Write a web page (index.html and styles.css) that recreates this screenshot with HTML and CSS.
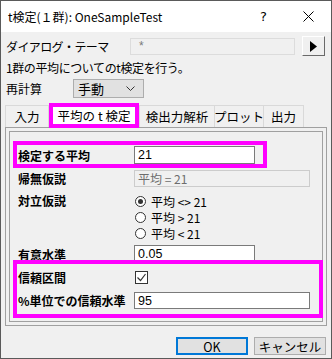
FILE: index.html
```html
<!DOCTYPE html>
<html lang="ja">
<head>
    <meta charset="UTF-8">
    <title>t検定(１群): OneSampleTest</title>
    <link rel="stylesheet" href="styles.css">
</head>
<body>

<div class="window">
    <div class="titlebar">
        <span class="title">t検定(１群): OneSampleTest</span>
        <span class="cap-btn cap-help">?</span>
        <span class="cap-btn">
            <svg width="11" height="11" viewBox="0 0 11 11"><path d="M0.5 0.5 L10.5 10.5 M10.5 0.5 L0.5 10.5" stroke="#000" stroke-width="1" fill="none"/></svg>
        </span>
    </div>

    <div class="client">
        <div class="top-row theme-row">
            <span class="top-label theme-label">ダイアログ・テーマ</span>
            <span class="theme-field">*</span>
            <span class="arrow-btn">
                <svg width="9" height="11" viewBox="0 0 9 11"><path d="M1 0 L8 5.5 L1 11 Z" fill="#000"/></svg>
            </span>
        </div>

        <div class="desc">1群の平均についてのt検定を行う。</div>

        <div class="top-row recalc-row">
            <span class="top-label recalc-label">再計算</span>
            <span class="select">
                <span>手動</span>
                <svg width="9" height="5" viewBox="0 0 9 5"><path d="M0.5 0.5 L4.5 4.5 L8.5 0.5" stroke="#333" stroke-width="1" fill="none"/></svg>
            </span>
        </div>

        <div class="tabs">
            <span class="tab tab-first">入力</span>
            <span class="tab tab-active">平均の t 検定</span>
            <span class="tab tab-power">検出力解析</span>
            <span class="tab tab-plot">プロット</span>
            <span class="tab tab-out">出力</span>
        </div>

        <div class="page">
            <div class="group">
                <div class="mark mark-mean">
                    <div class="field-row">
                        <span class="flabel">検定する平均</span>
                        <span class="input short">21</span>
                    </div>
                </div>

                <div class="field-row plain row-null">
                    <span class="flabel">帰無仮説</span>
                    <span class="input long disabled">平均 = 21</span>
                </div>

                <div class="field-row plain row-alt">
                    <span class="flabel">対立仮説</span>
                    <div class="radios">
                        <div class="radio-item"><span class="radio checked"></span>平均 &lt;&gt; 21</div>
                        <div class="radio-item"><span class="radio"></span>平均 &gt; 21</div>
                        <div class="radio-item"><span class="radio"></span>平均 &lt; 21</div>
                    </div>
                </div>

                <div class="field-row plain row-alpha">
                    <span class="flabel">有意水準</span>
                    <span class="input short">0.05</span>
                </div>

                <div class="mark mark-conf">
                    <div class="field-row row-ci">
                        <span class="flabel">信頼区間</span>
                        <span class="checkbox">
                            <svg width="11" height="11" viewBox="0 0 11 11"><path d="M1.5 5.5 L4.5 8.5 L9.5 2" stroke="#333" stroke-width="1.2" fill="none"/></svg>
                        </span>
                    </div>
                    <div class="field-row row-level">
                        <span class="flabel">%単位での信頼水準</span>
                        <span class="input long">95</span>
                    </div>
                </div>
            </div>
        </div>

        <div class="buttons">
            <span class="btn btn-default">OK</span>
            <span class="btn">キャンセル</span>
        </div>
    </div>
</div>

</body>
</html>
```

FILE: styles.css
```css
body {
    margin: 0;
    padding: 0;
    background-color: #ffffff;
    font-family: "Noto Sans CJK JP", "Noto Sans", sans-serif;
    font-size: 12px;
    color: #000000;
}

.window {
    width: 332px;
    height: 359px;
    box-sizing: border-box;
    border: 1px solid #5a5a5a;
    background: #f0f0f0;
    overflow: hidden;
}

/* title bar */

.titlebar {
    height: 31px;
    background: #ffffff;
    display: flex;
    align-items: center;
}

.title {
    flex: 1;
    padding-left: 7px;
    font-size: 12px;
    white-space: nowrap;
}

.cap-btn {
    width: 45px;
    height: 31px;
    display: flex;
    align-items: center;
    justify-content: center;
}

.cap-help {
    font-family: "DejaVu Sans", sans-serif;
    font-size: 13px;
}

/* upper rows */

.client {
    height: 326px;
}

.top-row {
    display: flex;
    align-items: center;
    padding-left: 5px;
}

.theme-row {
    margin-top: 4px;
    height: 20px;
}

.top-label {
    white-space: nowrap;
}

.theme-label {
    width: 124px;
    letter-spacing: -0.6px;
}

.theme-field {
    width: 165px;
    height: 17px;
    box-sizing: border-box;
    border: 1px solid #dcdcdc;
    background: #f0f0f0;
    color: #7a7a7a;
    padding-left: 8px;
    line-height: 15px;
    font-family: "Liberation Sans", sans-serif;
    font-size: 12px;
}

.arrow-btn {
    margin-left: 7px;
    width: 23px;
    height: 20px;
    box-sizing: border-box;
    border-top: 1px solid #ffffff;
    border-left: 1px solid #ffffff;
    border-right: 1px solid #6a6a6a;
    border-bottom: 1px solid #6a6a6a;
    background: #f0f0f0;
    display: flex;
    align-items: center;
    justify-content: center;
}

.desc {
    margin-top: 4px;
    height: 16px;
    line-height: 16px;
    padding-left: 5px;
    letter-spacing: -0.4px;
}

.recalc-row {
    margin-top: 3px;
    height: 19px;
}

.recalc-label {
    width: 67px;
}

.select {
    width: 71px;
    height: 19px;
    box-sizing: border-box;
    border: 1px solid #adadad;
    background: #e1e1e1;
    display: flex;
    align-items: center;
    justify-content: space-between;
    padding: 0 8px 0 4px;
    font-size: 13px;
}

/* tabs */

.tabs {
    margin-top: 5px;
    height: 24px;
    display: flex;
    align-items: flex-end;
    padding-left: 4px;
}

.tab {
    height: 22px;
    box-sizing: border-box;
    border: 1px solid #d9d9d9;
    border-bottom: none;
    display: flex;
    align-items: center;
    justify-content: center;
    font-size: 12.5px;
    white-space: nowrap;
}

.tab-first {
    width: 44px;
}

.tab-active {
    width: 90px;
    height: 25px;
    margin-bottom: -1px;
    border: 4px solid #ff00ff;
    background: #ffffff;
    position: relative;
}

.tab-power {
    width: 76px;
}

.tab-plot {
    width: 49px;
    border-left: none;
}

.tab-out {
    width: 40px;
    border-left: none;
}

/* tab page */

.page {
    margin-left: 4px;
    width: 322px;
    height: 199px;
    box-sizing: border-box;
    border: 1px solid #a0a0a0;
    background: #f0f0f0;
    padding: 3px;
}

.group {
    height: 191px;
    box-sizing: border-box;
    border: 1px solid #a0a0a0;
    padding: 9px 0 0 3px;
}

.mark {
    box-sizing: border-box;
    border: 4px solid #ff00ff;
}

.mark-mean {
    width: 254px;
    height: 27px;
    padding-top: 1px;
}

.mark-conf {
    width: 310px;
    height: 58px;
    margin-top: -3px;
    position: relative;
}

.field-row {
    display: flex;
    align-items: center;
    padding-left: 1px;
}

.field-row.plain {
    padding-left: 5px;
}

.flabel {
    width: 116px;
    font-weight: bold;
    white-space: nowrap;
}

.input {
    height: 18px;
    box-sizing: border-box;
    border: 1px solid #7a7a7a;
    background: #ffffff;
    padding-left: 3px;
    line-height: 16px;
    font-family: "Liberation Sans", sans-serif;
    font-size: 12.5px;
}

.input.short {
    width: 121px;
}

.input.long {
    width: 176px;
}

.input.disabled {
    border-color: #cccccc;
    background: #f0f0f0;
    color: #6d6d6d;
    font-family: "Noto Sans CJK JP", sans-serif;
    font-size: 12px;
}

.row-null {
    margin-top: 2px;
}

.row-null .input {
    height: 17px;
}

.row-alt {
    margin-top: 6px;
    align-items: flex-start;
}

.row-alt .flabel {
    line-height: 16px;
}

.radio-item {
    height: 16px;
    display: flex;
    align-items: center;
    font-size: 12px;
}

.radio {
    width: 11px;
    height: 11px;
    box-sizing: border-box;
    border: 1px solid #333333;
    border-radius: 50%;
    background: #ffffff;
    margin: 0 5px 0 1px;
    display: flex;
    align-items: center;
    justify-content: center;
}

.radio.checked::after {
    content: "";
    width: 5px;
    height: 5px;
    border-radius: 50%;
    background: #333333;
}

.row-alpha {
    margin-top: 4px;
}

.row-ci {
    height: 27px;
}

.checkbox {
    width: 13px;
    height: 13px;
    box-sizing: border-box;
    border: 1px solid #333333;
    background: #ffffff;
    margin-left: 1px;
    display: flex;
    align-items: center;
    justify-content: center;
}

.row-level {
    height: 19px;
}

.row-level .input {
    height: 17px;
}

/* dialog buttons */

.buttons {
    margin-top: 11px;
    display: flex;
    justify-content: flex-end;
    gap: 6px;
    padding-right: 5px;
}

.btn {
    width: 72px;
    height: 18px;
    box-sizing: border-box;
    border: 1px solid #adadad;
    background: #e1e1e1;
    display: flex;
    align-items: center;
    justify-content: center;
    font-size: 12.5px;
}

.btn-default {
    border: 2px solid #0078d7;
}
```
